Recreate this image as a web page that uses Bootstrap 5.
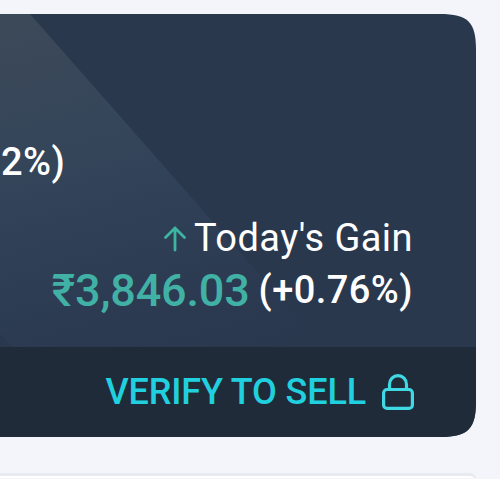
<!DOCTYPE html>
<html lang="en">
<head>
<meta charset="utf-8">
<meta name="viewport" content="width=device-width, initial-scale=1">
<title>Today's Gain</title>
<link href="https://cdn.jsdelivr.net/npm/bootstrap@5.3.0/dist/css/bootstrap.min.css" rel="stylesheet">
<style>
  body { background: #f3f5fb; font-family: Roboto, "Liberation Sans", sans-serif; height: 479px; padding-top: 14px; }
  .portfolio { width: 476px; height: 423px; background: #2a384e; clip-path: path("M0 0H440C468 0 476 8 476 36V387C476 415 468 423 440 423H0Z"); }
  .portfolio::before { content: ""; position: absolute; inset: 0; clip-path: polygon(0 0, 30px 0, 323px 333px, 12px 333px, 0 320px);
    background: linear-gradient(165deg, #3c4958 0, #36465a 130px, #2f3f56 240px, #2b3a50 330px, #2a384e 400px); }
  .summary { height: 333px; padding-right: 63px; }
  .overall { font-size: 38px; line-height: 44px; padding: 126px 0 0 1px; letter-spacing: .4px; }
  .gain-label { font-size: 38px; line-height: 44px; margin-top: 32px; letter-spacing: .45px; }
  .gain-row { margin-top: 4px; }
  .gain-value { font-size: 45px; line-height: 54px; letter-spacing: -.2px; color: #41b1a6; }
  .gain-pct { font-size: 38px; line-height: 53px; letter-spacing: .45px; margin-left: 9px; }
  .sell { height: 90px; padding-right: 62px; background: #202b3a; color: #20d0de; font-size: 36px; line-height: 40px; letter-spacing: -.15px; }
  .arrow { margin: 2px 7px 0 0; }
  .lock { margin-left: 16px; }
  .next-panel { height: 5px; width: 476px; margin-top: 36px; background: #fff; border: solid #e8eaf1; border-width: 3px 2px 0 0; border-top-right-radius: 9px 6px; }
  .medium { font-weight: 500; }
</style>
</head>
<body class="overflow-hidden">
<main>
  <section class="portfolio position-relative overflow-hidden text-white">
    <div class="summary position-relative d-flex flex-column">
      <div class="overall medium">2%)</div>
      <div class="gain-label d-flex align-items-center justify-content-end">
        <svg class="arrow" width="24" height="26" viewBox="0 0 24 26" fill="none" stroke="#3db5a3" stroke-width="2.8" stroke-linecap="round" stroke-linejoin="round" aria-hidden="true"><path d="M12 24V2M2.500 11.500 12 2l9.500 9.500"/></svg>
        <span>Today's Gain</span>
      </div>
      <div class="gain-row d-flex align-items-start justify-content-end medium">
        <span class="gain-value">₹3,846.03</span>
        <span class="gain-pct">(+0.76%)</span>
      </div>
    </div>
    <div class="sell position-relative d-flex align-items-center justify-content-end medium">
      <span>VERIFY TO SELL</span>
      <svg class="lock" width="32" height="36" viewBox="0 0 32 36" fill="none" stroke="#3fd9e3" stroke-width="3.2" aria-hidden="true"><rect x="1.6" y="15.500" width="28.800" height="18.900" rx="3.500"/><path d="M7.500 15v-4.500a8.500 8.900 0 0 1 17 0v4.500"/></svg>
    </div>
  </section>
  <section class="next-panel"></section>
</main>
<script src="https://cdn.jsdelivr.net/npm/bootstrap@5.3.0/dist/js/bootstrap.bundle.min.js"></script>
</body>
</html>
